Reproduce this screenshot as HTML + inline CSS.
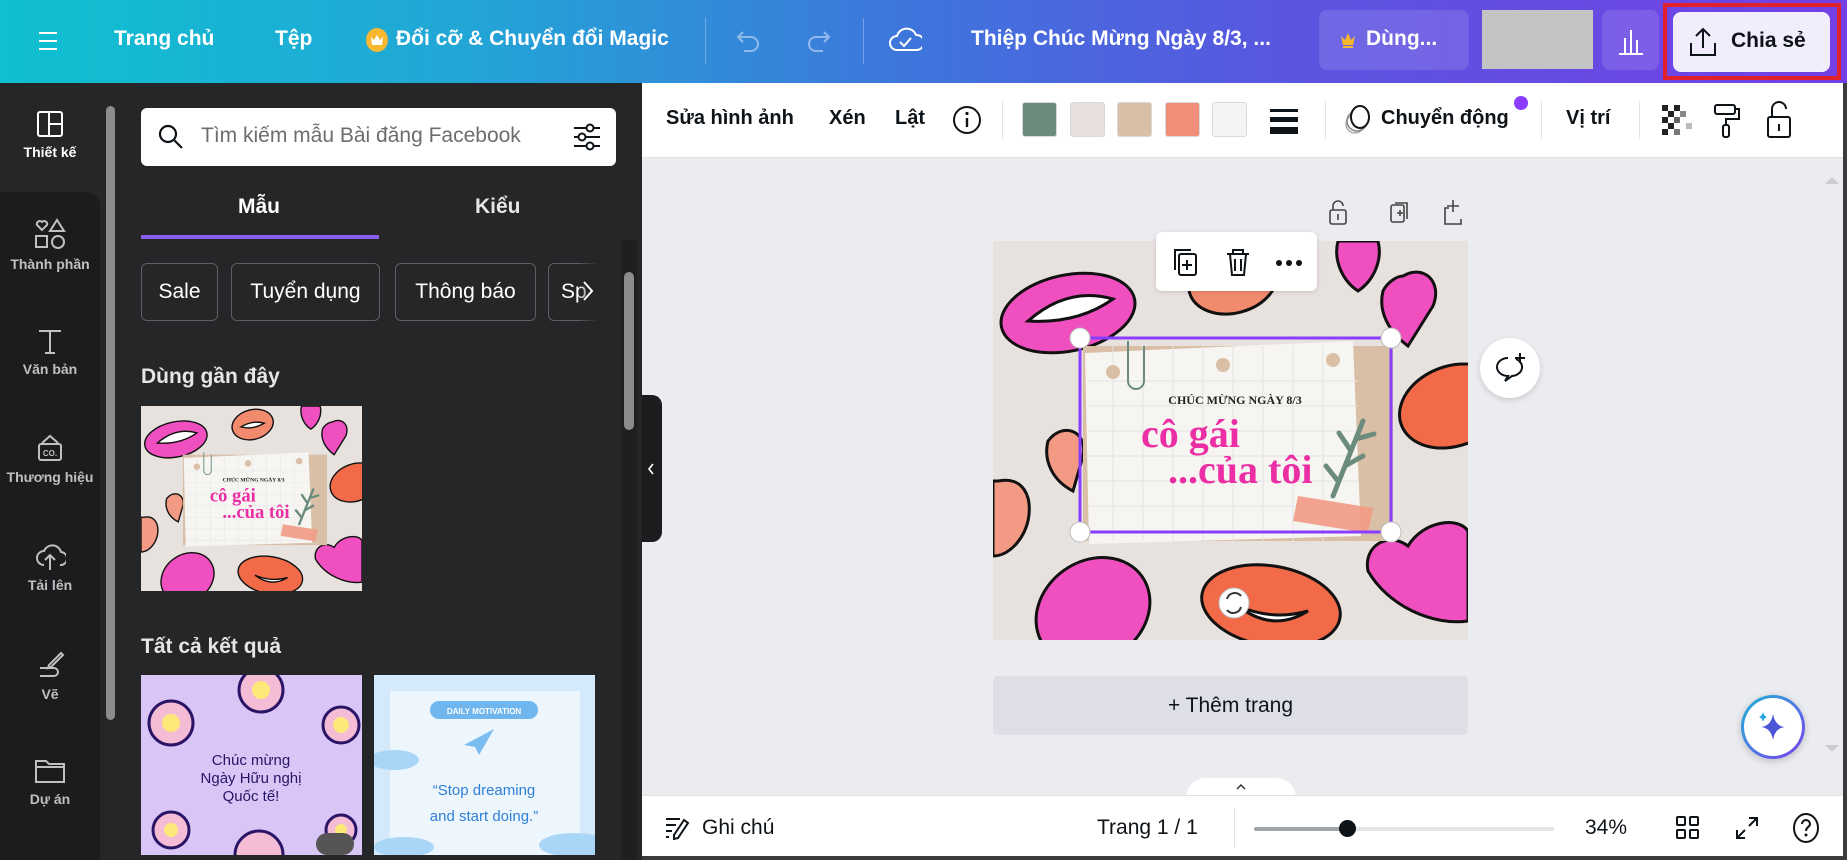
<!DOCTYPE html>
<html><head><meta charset="utf-8"><style>
*{margin:0;padding:0;box-sizing:border-box}
body{width:1847px;height:860px;overflow:hidden;font-family:"Liberation Sans","Noto Sans CJK SC",sans-serif;background:#ebecf0;position:relative}
.a{position:absolute}
#top{left:0;top:0;width:1847px;height:83px;background:linear-gradient(90deg,#0fc0d0 0%,#22a6d6 25%,#3f74dc 50%,#5a55e0 70%,#7440e6 100%)}
.tt{color:#fff;font-size:21px;font-weight:bold;top:27px;white-space:nowrap}
.vd{width:1px;background:rgba(255,255,255,.3);top:18px;height:46px}
#rail{left:0;top:83px;width:100px;height:777px;background:#252627}
#railb{left:0;top:192px;width:100px;height:668px;background:#1b1c1e;border-top-right-radius:14px}
.ri{width:100px;text-align:center;color:#bfc0c2;font-size:14px;font-weight:bold}
.ri svg{display:block;margin:0 auto 6px}
#panel{left:100px;top:83px;width:542px;height:777px;background:#252627}
.chip{top:263px;height:58px;border:1px solid #5e5f62;border-radius:6px;color:#fff;font-size:21px;line-height:56px;text-align:center}
.h2{color:#e6e6e6;font-size:21px;font-weight:bold}
#tb{left:642px;top:83px;width:1205px;height:75px;background:#fff;border-bottom:1px solid #e2e3e6}
.tbt{font-size:20px;font-weight:bold;color:#0e1318;top:24px;white-space:nowrap}
.sw{top:19px;width:35px;height:35px;border-radius:3px;border:1px solid #d9d9d9}
.dv{top:18px;width:1px;height:38px;background:#e3e3e3}
#bot{left:642px;top:795px;width:1205px;height:65px;background:#fff;border-top:1px solid #e0e1e4}
</style></head><body>
<svg width="0" height="0" style="position:absolute">
<defs>
<g id="art">
<rect width="475" height="399" fill="#e8e2df"/>
<g stroke="#111" stroke-width="3">
<ellipse cx="75" cy="72" rx="68" ry="38" fill="#f04fc0" transform="rotate(-12 75 72)"/>
<path d="M35 80q40-35 85-22-35 25-85 22z" fill="#fff"/>
<ellipse cx="240" cy="40" rx="45" ry="32" fill="#f28b6e" transform="rotate(-15 240 40)"/>
<path d="M215 45q25-15 50-8-25 15-50 8z" fill="#fff"/>
<path d="M345 0h40c5 20-5 40-20 50-15-10-25-30-20-50z" fill="#f04fc0"/>
<path d="M410 35c20-12 40 5 30 30l-25 40c-20-15-30-35-25-55 5-10 15-15 20-15z" fill="#f04fc0"/>
<ellipse cx="460" cy="165" rx="55" ry="40" fill="#f26a48" transform="rotate(-20 460 165)"/>
<path d="M5 240c25-5 35 15 30 40-5 20-20 35-35 35v-75z" fill="#f29a84"/>
<path d="M55 200c15-20 40-10 35 15l-10 35c-20-10-30-30-25-50z" fill="#f29a84"/>
<path d="M375 330c-5-25 20-40 40-25 15-25 50-30 60-15v90c-35 5-80-15-100-50z" fill="#f04fc0"/>
<ellipse cx="100" cy="370" rx="60" ry="50" fill="#f04fc0" transform="rotate(-35 100 370)"/>
<ellipse cx="278" cy="365" rx="70" ry="40" fill="#f26a48" transform="rotate(10 278 365)"/>
<path d="M245 365q35 15 70 5-35 22-70-5z" fill="#fff"/>
</g>
<rect x="90" y="105" width="310" height="195" fill="#d9bfa6"/>
<path d="M92 112l268-12 8 195-272 8z" fill="#f6f5f2"/>
<g stroke="#e4e4e4" stroke-width="1"><path d="M95 140h270M95 165h270M95 190h270M95 215h270M95 240h270M95 265h270M95 290h270M120 105v195M150 105v195M180 105v195M210 105v195M240 105v195M270 105v195M300 105v195M330 105v195"/></g>
<circle cx="120" cy="131" r="7" fill="#d9bfa6"/><circle cx="230" cy="124" r="7" fill="#d9bfa6"/><circle cx="340" cy="119" r="7" fill="#d9bfa6"/>
<path d="M135 100v40a8 8 0 0016 0v-35" fill="none" stroke="#6b8c7d" stroke-width="2"/>
<text x="242" y="163" font-size="12" text-anchor="middle" font-family="Liberation Serif" font-weight="bold" fill="#222">CHÚC MỪNG NGÀY 8/3</text>
<text x="148" y="206" font-size="40" font-family="Liberation Serif" font-weight="bold" fill="#ec2ea5">cô gái</text>
<text x="175" y="242" font-size="40" font-family="Liberation Serif" font-weight="bold" fill="#ec2ea5">...của tôi</text>
<path d="M340 255l30-75M345 240l-12-15M352 225l18-10M358 210l-12-18M363 198l18-5" stroke="#6b8c7d" stroke-width="5" stroke-linecap="round"/>
<path d="M305 255l75 12-5 25-75-12z" fill="#f29a84" opacity=".9"/>
</g>
</defs></svg>
<div id="top" class="a">
 <svg class="a" style="left:37px;top:30px" width="22" height="22"><path d="M2 3h18M2 11h18M2 19h18" stroke="#fff" stroke-width="2"/></svg>
 <div class="a tt" style="left:114px">Trang chủ</div>
 <div class="a tt" style="left:275px">Tệp</div>
 <div class="a" style="left:366px;top:28px;width:22px;height:24px;border-radius:50%;background:#f7b731"></div>
 <svg class="a" style="left:370px;top:33px" width="14" height="14"><path d="M1 4l3 3 3-5 3 5 3-3-1 8H2z" fill="#fff"/></svg>
 <div class="a tt" style="left:396px">Đổi cỡ &amp; Chuyển đổi Magic</div>
 <div class="a vd" style="left:705px"></div>
 <svg class="a" style="left:735px;top:28px" width="28" height="26"><path d="M8 4L3 9l5 5M3 9h13a7 7 0 010 14H9" fill="none" stroke="rgba(255,255,255,.45)" stroke-width="2"/></svg>
 <svg class="a" style="left:804px;top:28px" width="28" height="26"><path d="M20 4l5 5-5 5M25 9H12a7 7 0 000 14h7" fill="none" stroke="rgba(255,255,255,.45)" stroke-width="2"/></svg>
 <div class="a vd" style="left:863px"></div>
 <svg class="a" style="left:888px;top:25px" width="34" height="30"><path d="M9 25a7 7 0 010-14 10 10 0 0119-1 7 7 0 011 15z" fill="none" stroke="#fff" stroke-width="2"/><path d="M12 17l4 4 7-8" fill="none" stroke="#fff" stroke-width="2"/></svg>
 <div class="a tt" style="left:971px">Thiệp Chúc Mừng Ngày 8/3, ...</div>
 <div class="a" style="left:1319px;top:10px;width:150px;height:60px;border-radius:8px;background:rgba(255,255,255,.12)"></div>
 <svg class="a" style="left:1340px;top:31px" width="16" height="18"><path d="M1 5l4 4 3-7 3 7 4-4-2 9H3z" fill="#f7b731"/><rect x="3" y="15" width="10" height="2" fill="#f7b731"/></svg>
 <div class="a tt" style="left:1366px">Dùng...</div>
 <div class="a" style="left:1482px;top:10px;width:111px;height:59px;background:#c4c4c4"></div>
 <div class="a" style="left:1602px;top:10px;width:57px;height:60px;border-radius:8px;background:rgba(255,255,255,.12)"></div>
 <svg class="a" style="left:1617px;top:26px" width="28" height="30"><path d="M2 28h24M8 27V12M14 27V4M20 27V14" stroke="#fff" stroke-width="2"/></svg>
 <div class="a" style="left:1663px;top:3px;width:178px;height:77px;border:4px solid #e0202c"></div>
 <div class="a" style="left:1673px;top:12px;width:157px;height:60px;border-radius:8px;background:#f1edfd"></div>
 <svg class="a" style="left:1688px;top:26px" width="30" height="32"><path d="M15 22V3M8 10l7-7 7 7M3 17v12h24V17" fill="none" stroke="#0e1318" stroke-width="2"/></svg>
 <div class="a tt" style="left:1731px;color:#0e1318;top:29px">Chia sẻ</div>
</div>

<div id="rail" class="a"></div>
<div id="railb" class="a"></div>
<div class="a ri" style="left:0;top:110px;color:#fff"><svg width="28" height="28"><rect x="2" y="2" width="24" height="24" rx="2" fill="none" stroke="#fff" stroke-width="2"/><path d="M13 2v24M13 14h13" stroke="#fff" stroke-width="2"/></svg>Thiết kế</div>
<div class="a ri" style="left:0;top:218px"><svg width="32" height="32"><path d="M8 12l-5-5a3 3 0 015-3 3 3 0 015 3z" fill="none" stroke="#bfc0c2" stroke-width="2"/><path d="M23 2l7 11h-14z" fill="none" stroke="#bfc0c2" stroke-width="2"/><rect x="2" y="18" width="11" height="11" fill="none" stroke="#bfc0c2" stroke-width="2"/><circle cx="24" cy="24" r="6" fill="none" stroke="#bfc0c2" stroke-width="2"/></svg>Thành phần</div>
<div class="a ri" style="left:0;top:327px"><svg width="28" height="28"><path d="M3 4h22M14 4v22M9 26h10" stroke="#bfc0c2" stroke-width="2"/></svg>Văn bản</div>
<div class="a ri" style="left:0;top:433px"><svg width="30" height="30"><rect x="4" y="11" width="22" height="16" rx="2" fill="none" stroke="#bfc0c2" stroke-width="2"/><path d="M7 10l8-7 8 7" fill="none" stroke="#bfc0c2" stroke-width="2"/><text x="15" y="23" font-size="8" fill="#bfc0c2" text-anchor="middle" font-family="Liberation Sans">CO.</text></svg>Thương hiệu</div>
<div class="a ri" style="left:0;top:541px"><svg width="32" height="30"><path d="M10 24a7 7 0 010-14 9 9 0 0117 1 6 6 0 01-1 13" fill="none" stroke="#bfc0c2" stroke-width="2"/><path d="M16 29V15M11 19l5-5 5 5" fill="none" stroke="#bfc0c2" stroke-width="2"/></svg>Tải lên</div>
<div class="a ri" style="left:0;top:650px"><svg width="30" height="30"><path d="M26 3l2 2-12 12-3 1 1-3zM5 18h14a4 4 0 010 8H5" fill="none" stroke="#bfc0c2" stroke-width="2"/></svg>Vẽ</div>
<div class="a ri" style="left:0;top:757px"><svg width="32" height="28"><path d="M2 4h10l3 3h15v18H2z" fill="none" stroke="#bfc0c2" stroke-width="2"/><path d="M2 10h28" stroke="#bfc0c2" stroke-width="2"/></svg>Dự án</div>

<div id="panel" class="a"></div>
<div class="a" style="left:106px;top:106px;width:9px;height:614px;border-radius:5px;background:#8c8c8c"></div>
<div class="a" style="left:141px;top:108px;width:475px;height:58px;background:#fff;border-radius:6px"></div>
<svg class="a" style="left:157px;top:123px" width="28" height="28"><circle cx="11" cy="11" r="8" fill="none" stroke="#0e1318" stroke-width="2.2"/><path d="M17 17l8 8" stroke="#0e1318" stroke-width="2.2"/></svg>
<div class="a" style="left:201px;top:124px;font-size:21px;color:#6b6d70">Tìm kiếm mẫu Bài đăng Facebook</div>
<svg class="a" style="left:572px;top:122px" width="30" height="30"><path d="M2 6h26M2 15h26M2 24h26" stroke="#0e1318" stroke-width="2"/><circle cx="18" cy="6" r="3.5" fill="#fff" stroke="#0e1318" stroke-width="2"/><circle cx="10" cy="15" r="3.5" fill="#fff" stroke="#0e1318" stroke-width="2"/><circle cx="18" cy="24" r="3.5" fill="#fff" stroke="#0e1318" stroke-width="2"/></svg>
<div class="a" style="left:238px;top:195px;font-size:21px;font-weight:bold;color:#fff">Mẫu</div>
<div class="a" style="left:475px;top:195px;font-size:21px;font-weight:bold;color:#e6e6e6">Kiểu</div>
<div class="a" style="left:141px;top:235px;width:238px;height:4px;background:#8b5cf6"></div>
<div class="a chip" style="left:141px;width:77px">Sale</div>
<div class="a chip" style="left:231px;width:149px">Tuyển dụng</div>
<div class="a chip" style="left:395px;width:141px">Thông báo</div>
<div class="a chip" style="left:548px;width:60px;border-right:none;overflow:hidden;text-align:left;padding-left:12px">Sp</div>
<div class="a" style="left:578px;top:263px;width:40px;height:58px;background:linear-gradient(90deg,rgba(37,38,39,0),#252627 50%)"></div>
<svg class="a" style="left:582px;top:280px" width="12" height="22"><path d="M2 2l8 9-8 9" fill="none" stroke="#fff" stroke-width="2"/></svg>
<div class="a" style="left:621px;top:240px;width:16px;height:620px;background:#1e1f21"></div>
<div class="a" style="left:624px;top:272px;width:10px;height:158px;border-radius:5px;background:#8c8c8c"></div>
<div class="a h2" style="left:141px;top:365px">Dùng gần đây</div>
<div class="a h2" style="left:141px;top:635px">Tất cả kết quả</div>

<svg class="a" style="left:141px;top:406px" width="221" height="185" viewBox="0 0 475 399" preserveAspectRatio="none"><use href="#art"/></svg>
<svg class="a" style="left:141px;top:675px" width="221" height="180" viewBox="0 0 221 180">
<rect width="221" height="180" fill="#d9c6f7"/>
<g fill="#f5bcd6" stroke="#2a1466" stroke-width="3"><circle cx="30" cy="48" r="22"/><circle cx="120" cy="15" r="22"/><circle cx="200" cy="50" r="18"/><circle cx="30" cy="155" r="18"/><circle cx="118" cy="180" r="24"/><circle cx="200" cy="155" r="15"/></g>
<g fill="#fde97a"><circle cx="30" cy="48" r="9"/><circle cx="120" cy="15" r="9"/><circle cx="200" cy="50" r="8"/><circle cx="30" cy="155" r="7"/><circle cx="200" cy="155" r="6"/></g>
<text x="110" y="90" font-size="15" text-anchor="middle" fill="#2a1466" font-family="Liberation Sans">Chúc mừng</text>
<text x="110" y="108" font-size="15" text-anchor="middle" fill="#2a1466" font-family="Liberation Sans">Ngày Hữu nghị</text>
<text x="110" y="126" font-size="15" text-anchor="middle" fill="#2a1466" font-family="Liberation Sans">Quốc tế!</text>
<rect x="175" y="158" width="38" height="22" rx="11" fill="#555"/>
</svg>
<svg class="a" style="left:374px;top:675px" width="221" height="180" viewBox="0 0 221 180">
<rect width="221" height="180" fill="#d4eafc"/>
<rect x="16" y="16" width="190" height="164" fill="#eef6fd"/>
<rect x="56" y="26" width="108" height="18" rx="9" fill="#6fb6ef"/>
<text x="110" y="39" font-size="8" text-anchor="middle" fill="#fff" font-family="Liberation Sans" font-weight="bold">DAILY MOTIVATION</text>
<path d="M90 70l30-16-15 26-4-8z" fill="#7bbdf0"/>
<text x="110" y="120" font-size="15" text-anchor="middle" fill="#2f7fd6" font-family="Liberation Sans">“Stop dreaming</text>
<text x="110" y="146" font-size="15" text-anchor="middle" fill="#2f7fd6" font-family="Liberation Sans">and start doing.”</text>
<ellipse cx="20" cy="85" rx="25" ry="10" fill="#a9d6f7"/><ellipse cx="200" cy="170" rx="35" ry="12" fill="#a9d6f7"/><ellipse cx="30" cy="172" rx="30" ry="10" fill="#a9d6f7"/>
</svg>
<div class="a" style="left:642px;top:395px;width:20px;height:147px;background:#1b1c1e;border-radius:0 10px 10px 0"></div>
<svg class="a" style="left:646px;top:462px" width="10" height="14"><path d="M7 2L3 7l4 5" fill="none" stroke="#fff" stroke-width="1.6"/></svg>

<div id="tb" class="a">
 <div class="a tbt" style="left:24px">Sửa hình ảnh</div>
 <div class="a tbt" style="left:187px">Xén</div>
 <div class="a tbt" style="left:253px">Lật</div>
 <svg class="a" style="left:309px;top:21px" width="32" height="32"><circle cx="16" cy="16" r="13" fill="none" stroke="#0e1318" stroke-width="2"/><path d="M16 14v9" stroke="#0e1318" stroke-width="2.4"/><circle cx="16" cy="9.5" r="1.6" fill="#0e1318"/></svg>
 <div class="a dv" style="left:360px"></div>
 <div class="a sw" style="left:380px;background:#6b8c7d"></div>
 <div class="a sw" style="left:428px;background:#e8e0dc"></div>
 <div class="a sw" style="left:475px;background:#d9bfa6"></div>
 <div class="a sw" style="left:523px;background:#f08e7a"></div>
 <div class="a sw" style="left:570px;background:#f4f4f4"></div>
 <svg class="a" style="left:627px;top:24px" width="30" height="28"><rect x="1" y="2" width="28" height="3" fill="#0e1318"/><rect x="1" y="10" width="28" height="5" fill="#0e1318"/><rect x="1" y="20" width="28" height="7" fill="#0e1318"/></svg>
 <div class="a dv" style="left:683px"></div>
 <svg class="a" style="left:698px;top:20px" width="36" height="36"><circle cx="15" cy="21" r="9" fill="none" stroke="#aaa" stroke-width="1.5"/><circle cx="17" cy="18" r="10" fill="none" stroke="#888" stroke-width="1.5"/><ellipse cx="20" cy="14" rx="9" ry="11" fill="#fff" stroke="#0e1318" stroke-width="2"/></svg>
 <div class="a tbt" style="left:739px">Chuyển động</div>
 <div class="a" style="left:872px;top:13px;width:14px;height:14px;border-radius:50%;background:#8b3dff"></div>
 <div class="a dv" style="left:899px"></div>
 <div class="a tbt" style="left:924px">Vị trí</div>
 <div class="a dv" style="left:997px"></div>
 <svg class="a" style="left:1020px;top:22px" width="30" height="30"><g fill="#222"><rect x="0" y="0" width="6" height="6"/><rect x="12" y="0" width="6" height="6"/><rect x="6" y="6" width="6" height="6"/><rect x="18" y="6" width="6" height="6" fill="#888"/><rect x="0" y="12" width="6" height="6"/><rect x="12" y="12" width="6" height="6" fill="#666"/><rect x="6" y="18" width="6" height="6"/><rect x="24" y="18" width="6" height="6" fill="#bbb"/><rect x="0" y="24" width="6" height="6"/><rect x="12" y="24" width="6" height="6" fill="#777"/></g></svg>
 <svg class="a" style="left:1071px;top:20px" width="30" height="36"><rect x="2" y="2" width="20" height="9" rx="2" fill="none" stroke="#0e1318" stroke-width="2"/><path d="M22 6h4v10H13v6" fill="none" stroke="#0e1318" stroke-width="2"/><rect x="10" y="22" width="6" height="12" rx="2" fill="none" stroke="#0e1318" stroke-width="2"/></svg>
 <svg class="a" style="left:1123px;top:17px" width="28" height="40"><path d="M7 17V9a7 7 0 0114 0" fill="none" stroke="#0e1318" stroke-width="2"/><rect x="3" y="17" width="22" height="20" rx="2" fill="none" stroke="#0e1318" stroke-width="2"/><path d="M14 24v7" stroke="#0e1318" stroke-width="2"/></svg>
</div>

<svg class="a" style="left:1325px;top:198px" width="140" height="30"><g fill="none" stroke="#444" stroke-width="1.6"><path d="M8 12V8a5 5 0 0110 0"/><rect x="5" y="12" width="16" height="14" rx="2"/><path d="M13 16v6"/><rect x="66" y="7" width="13" height="17" rx="2"/><path d="M70 5h12v16M72 15h6M75 12v6"/><path d="M124 10h-4v16h16v-5M128 2v12M122 8h12"/></g></svg>
<svg class="a" style="left:993px;top:241px" width="475" height="399" viewBox="0 0 475 399">
<use href="#art"/>
<rect x="87" y="97" width="311" height="194" fill="none" stroke="#8b3dff" stroke-width="3"/>
<g fill="#fff" stroke="#bbb"><circle cx="87" cy="97" r="10"/><circle cx="398" cy="97" r="10"/><circle cx="87" cy="291" r="10"/><circle cx="398" cy="291" r="10"/><circle cx="241" cy="362" r="15"/></g>
<path d="M234 358a8 8 0 0114-3M248 366a8 8 0 01-14 3" fill="none" stroke="#333" stroke-width="2"/>
</svg>
<div class="a" style="left:1156px;top:232px;width:161px;height:59px;background:#fff;border-radius:6px;box-shadow:0 1px 4px rgba(0,0,0,.15)"></div>
<svg class="a" style="left:1171px;top:246px" width="135" height="32"><g fill="none" stroke="#0e1318" stroke-width="2"><rect x="8" y="8" width="17" height="21" rx="2"/><path d="M4 24V4h16M16 14v10M11 19h10"/><path d="M56 8h22M62 8V4h10v4M59 8l2 21h12l2-21M64 13v12M70 13v12"/></g><g fill="#0e1318"><circle cx="108" cy="17" r="3"/><circle cx="118" cy="17" r="3"/><circle cx="128" cy="17" r="3"/></g></svg>
<div class="a" style="left:1480px;top:338px;width:60px;height:60px;border-radius:50%;background:#fff;box-shadow:0 2px 6px rgba(0,0,0,.15)"></div>
<svg class="a" style="left:1494px;top:352px" width="34" height="32"><path d="M14 6a11 9 0 100 18l-3 5 7-5a11 9 0 004-17" fill="none" stroke="#0e1318" stroke-width="2"/><path d="M26 1v10M21 6h10" stroke="#0e1318" stroke-width="2"/></svg>
<div class="a" style="left:993px;top:676px;width:475px;height:59px;background:#dedfe6;border-radius:5px;text-align:center;line-height:59px;font-size:21px;color:#0e1318">+ Thêm trang</div>
<div class="a" style="left:1741px;top:695px;width:64px;height:64px;border-radius:50%;background:linear-gradient(135deg,#1fb6d6,#7a3ff0);box-shadow:0 2px 8px rgba(0,0,0,.2)"></div>
<div class="a" style="left:1744px;top:698px;width:58px;height:58px;border-radius:50%;background:#fff"></div>
<svg class="a" style="left:1757px;top:710px" width="32" height="34"><path d="M16 4q2 12 12 13-10 1-12 13-2-12-12-13 10-1 12-13z" fill="#4b55d8"/><path d="M6 2q1 4 4 5-3 1-4 5-1-4-4-5 3-1 4-5z" fill="#2aa6dc"/></svg>
<div class="a" style="left:1825px;top:170px;width:0;height:0;border:7px solid transparent;border-bottom-color:#ccc"></div>
<div class="a" style="left:1825px;top:745px;width:0;height:0;border:7px solid transparent;border-top-color:#ccc"></div>
<div class="a" style="left:1186px;top:778px;width:110px;height:20px;background:#fff;border-radius:20px 20px 0 0"></div>
<svg class="a" style="left:1234px;top:782px" width="14" height="10"><path d="M3 7l4-4 4 4" fill="none" stroke="#333" stroke-width="1.5"/></svg>
<div id="bot" class="a">
 <svg class="a" style="left:22px;top:20px" width="26" height="24"><path d="M2 3h14M2 9h10M2 15h6M2 21h3" stroke="#0e1318" stroke-width="2"/><path d="M20 4l4 3-10 15-4 1 0-4z" fill="none" stroke="#0e1318" stroke-width="2"/></svg>
 <div class="a" style="left:60px;top:20px;font-size:21px;color:#0e1318">Ghi chú</div>
 <div class="a" style="left:455px;top:20px;font-size:21px;color:#0e1318">Trang 1 / 1</div>
 <div class="a" style="left:592px;top:12px;width:1px;height:40px;background:#e3e3e3"></div>
 <div class="a" style="left:612px;top:31px;width:300px;height:4px;border-radius:2px;background:#e3e4e8"></div>
 <div class="a" style="left:612px;top:31px;width:93px;height:4px;border-radius:2px;background:#9fa3aa"></div>
 <div class="a" style="left:697px;top:24px;width:17px;height:17px;border-radius:50%;background:#0e1318"></div>
 <div class="a" style="left:943px;top:20px;font-size:21px;color:#0e1318">34%</div>
 <svg class="a" style="left:1033px;top:19px" width="26" height="26"><g fill="none" stroke="#0e1318" stroke-width="2"><rect x="2" y="2" width="8" height="8" rx="1"/><rect x="15" y="2" width="8" height="8" rx="1"/><rect x="2" y="15" width="8" height="8" rx="1"/><rect x="15" y="15" width="8" height="8" rx="1"/></g></svg>
 <svg class="a" style="left:1092px;top:19px" width="26" height="26"><path d="M15 3h8v8M23 3l-8 8M11 23H3v-8M3 23l8-8" fill="none" stroke="#0e1318" stroke-width="2"/></svg>
 <svg class="a" style="left:1149px;top:16px" width="30" height="32"><ellipse cx="15" cy="16" rx="12" ry="14" fill="none" stroke="#0e1318" stroke-width="2"/><path d="M11 12a4 4 0 118 0c0 3-4 3-4 7" fill="none" stroke="#0e1318" stroke-width="2"/><circle cx="15" cy="23" r="1.5" fill="#0e1318"/></svg>
</div>
<div class="a" style="left:1843px;top:83px;width:4px;height:777px;background:#3a3b3d"></div>
<div class="a" style="left:642px;top:856px;width:1205px;height:4px;background:#3a3b3d"></div>
</body></html>
